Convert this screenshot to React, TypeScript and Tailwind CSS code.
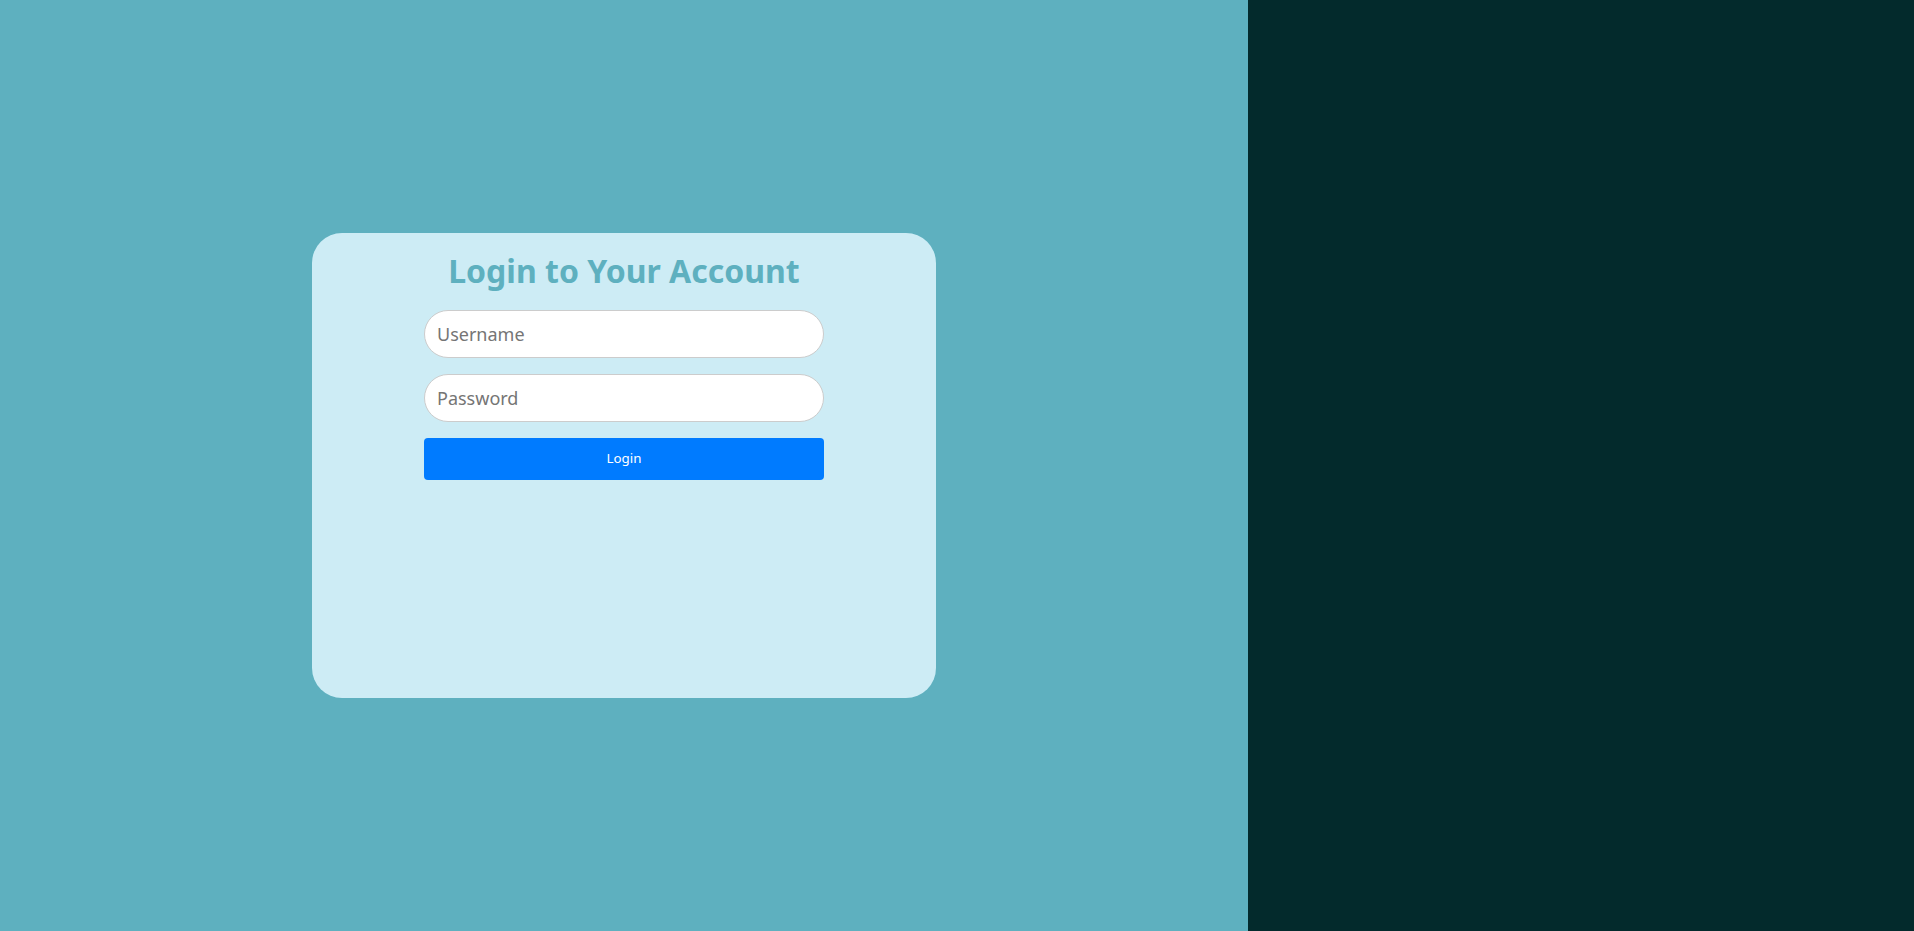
export default function App() {
  return (
    <div className="flex h-screen w-full font-['Noto_Sans',sans-serif]">
      <div className="flex w-[1248px] items-center justify-center bg-[#5eb0bf]">
        <div className="flex h-1/2 w-1/2 flex-col items-center rounded-[30px] bg-[#cdecf5] pt-[14px]">
          <h2 className="mb-[15px] text-[32px] font-bold text-[#5eb0bf]">Login to Your Account</h2>
          <form className="flex w-[400px] flex-col gap-4" onSubmit={(e) => e.preventDefault()}>
            <input
              type="text"
              placeholder="Username"
              className="h-[48px] w-full rounded-full border border-[#ccc] bg-white px-3 text-lg text-gray-800 placeholder:text-[#757575] outline-none"
            />
            <input
              type="password"
              placeholder="Password"
              className="h-[48px] w-full rounded-full border border-[#ccc] bg-white px-3 text-lg text-gray-800 placeholder:text-[#757575] outline-none"
            />
            <button
              type="submit"
              className="h-[42px] w-full rounded-[4px] bg-[#007bff] text-[13.33px] text-white"
            >
              Login
            </button>
          </form>
        </div>
      </div>
      <div className="flex-1 bg-[#032a2c]" />
    </div>
  );
}
